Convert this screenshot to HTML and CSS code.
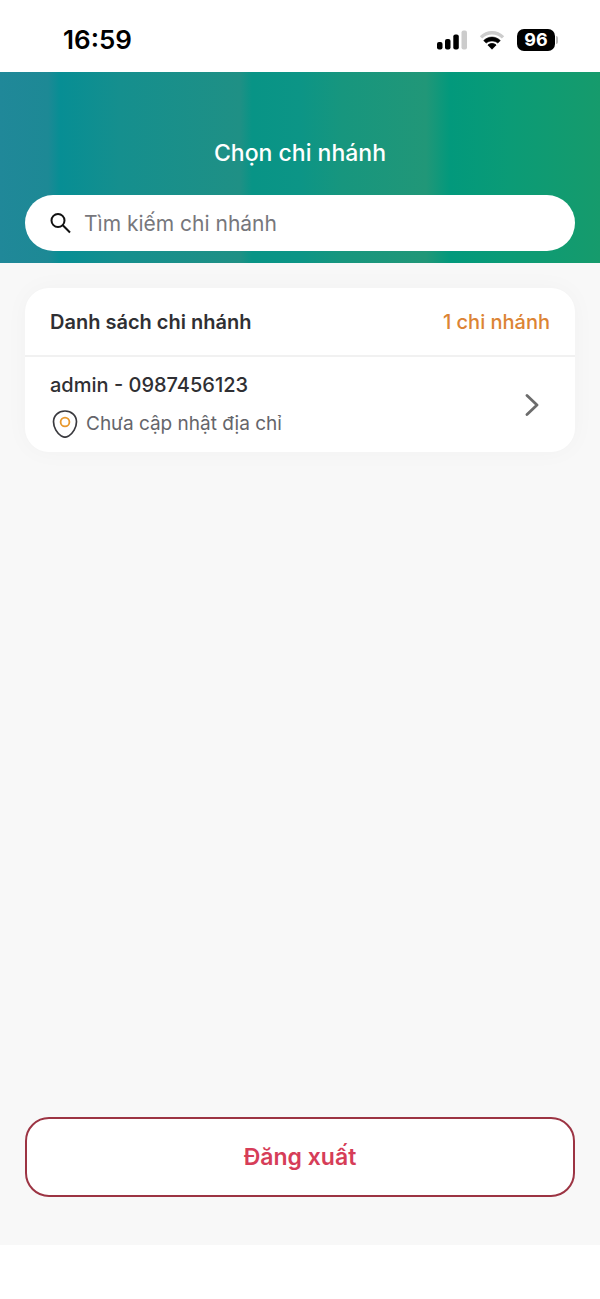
FILE: index.html
```html
<!DOCTYPE html>
<html lang="vi">
<head>
    <meta charset="UTF-8">
    <meta name="viewport" content="width=device-width, initial-scale=1.0">
    <title>Chọn chi nhánh</title>
    <link rel="stylesheet" href="styles.css">
</head>
<body>
    <div class="status-bar">
        <span class="time">16:59</span>
        <div class="status-icons">
            <svg class="signal" width="30" height="20" viewBox="0 0 30 20">
                <rect x="0" y="12" width="5.5" height="7.5" rx="2"/>
                <rect x="8" y="9" width="5.5" height="10.5" rx="2"/>
                <rect x="16.3" y="4.5" width="5.5" height="15" rx="2"/>
                <rect x="24.5" y="0.5" width="5.5" height="19" rx="2" fill="#cccccc"/>
            </svg>
            <svg class="wifi" width="26" height="20" viewBox="0 0 26 20">
                <path d="M0.8 6.2 C7.5 -0.8 18.5 -0.8 25.2 6.2 L22.8 8.6 C17.5 3.1 8.5 3.1 3.2 8.6 Z" fill="#cccccc"/>
                <path d="M4.7 10.6 C9.2 5.9 16.8 5.9 21.3 10.6 L18.8 13.1 C15.6 10.2 10.4 10.2 7.2 13.1 Z" stroke="#000000" stroke-width="0.6" stroke-linejoin="round"/>
                <path d="M8.9 15 C11.2 13 14.8 13 17.1 15 L13 19.2 Z" stroke="#000000" stroke-width="0.8" stroke-linejoin="round"/>
            </svg>
            <span class="battery">96</span>
        </div>
    </div>

    <header class="header">
        <h1>Chọn chi nhánh</h1>
        <label class="search">
            <svg width="22" height="22" viewBox="0 0 22 22" fill="none" stroke="#111111" stroke-width="2">
                <circle cx="8" cy="8.5" r="6.5"/>
                <path d="M12.8 13.3 L20 20.5"/>
            </svg>
            <input type="search" placeholder="Tìm kiếm chi nhánh" aria-label="Tìm kiếm chi nhánh">
        </label>
    </header>

    <main class="content">
        <section class="card">
            <div class="card-header">
                <h2>Danh sách chi nhánh</h2>
                <span class="count">1 chi nhánh</span>
            </div>
            <a class="branch" href="#">
                <div class="branch-info">
                    <div class="branch-name">admin - 0987456123</div>
                    <div class="branch-address">
                        <svg width="26" height="28" viewBox="0 0 26 28" fill="none">
                            <path d="M13 1 C6.4 1 1.5 5.5 1.5 11.8 C1.5 17.6 5.2 23.4 9.4 26.1 C11.7 27.5 14.3 27.5 16.6 26.1 C20.8 23.4 24.5 17.6 24.5 11.8 C24.5 5.5 19.6 1 13 1 Z" stroke="#3a3a3f" stroke-width="1.7"/>
                            <circle cx="13" cy="12" r="4.4" stroke="#e8982c" stroke-width="1.8"/>
                        </svg>
                        <span>Chưa cập nhật địa chỉ</span>
                    </div>
                </div>
                <svg class="chevron" width="14" height="22" viewBox="0 0 14 22" fill="none" stroke="#6c6c6c" stroke-width="2.8" stroke-linecap="round" stroke-linejoin="round">
                    <path d="M2 1.5 L12 11 L2 20.5"/>
                </svg>
            </a>
        </section>

        <button class="logout" type="button">Đăng xuất</button>
    </main>
</body>
</html>
```
FILE: styles.css
```css
* {
    box-sizing: border-box;
}

body {
    margin: 0;
    min-height: 100vh;
    display: flex;
    flex-direction: column;
    padding-bottom: 54px;
    background-color: #ffffff;
    font-family: Inter, "Noto Sans", sans-serif;
    color: #2f2f33;
}

h1, h2 {
    margin: 0;
}

svg {
    display: block;
    flex-shrink: 0;
}

/* status bar */
.status-bar {
    height: 72px;
    padding: 8px 42px 0 63px;
    display: flex;
    justify-content: space-between;
    align-items: flex-start;
    color: #000000;
}

.time {
    font-size: 26px;
    font-weight: 600;
    line-height: 64px;
    height: 64px;
}

.status-icons {
    display: flex;
    align-items: center;
    gap: 12px;
    height: 64px;
}

.battery {
    position: relative;
    width: 38px;
    height: 22px;
    margin-right: 3px;
    border-radius: 7px;
    background-color: #000000;
    color: #ffffff;
    font-size: 18px;
    font-weight: 700;
    line-height: 22px;
    text-align: center;
}

.battery::after {
    content: "";
    position: absolute;
    right: -3px;
    top: 7px;
    width: 2px;
    height: 8px;
    border-radius: 0 2px 2px 0;
    background-color: #bbbbbb;
}

/* header */
.header {
    padding: 64px 25px 12px;
    display: flex;
    flex-direction: column;
    gap: 25px;
    background: linear-gradient(90deg, #208899 0%, #1d8995 8%, #078e94 10%, #158f8e 20%, #1f9085 40%, #089486 42%, #0c9586 50%, #17967e 57%, #219778 71%, #02997c 75%, #0b9b76 85%, #169b6c 100%);
}

.header h1 {
    color: #ffffff;
    font-size: 23px;
    font-weight: 500;
    line-height: 34px;
    text-align: center;
}

.search {
    display: flex;
    align-items: center;
    gap: 12px;
    height: 56px;
    padding: 0 25px;
    border-radius: 28px;
    background-color: #ffffff;
}

.search input {
    flex: 1;
    min-width: 0;
    padding: 0;
    border: none;
    outline: none;
    background: none;
    font-family: inherit;
    font-size: 21px;
    color: #2f2f33;
}

.search input::placeholder {
    color: #77777c;
    opacity: 1;
}

/* content */
.content {
    flex: 1;
    display: flex;
    flex-direction: column;
    justify-content: space-between;
    gap: 24px;
    padding: 25px 25px 48px;
    background-color: #f8f8f8;
}

.card {
    border-radius: 24px;
    background-color: #ffffff;
    box-shadow: 0 0 24px rgba(0, 0, 0, 0.03);
}

.card-header {
    display: flex;
    justify-content: space-between;
    align-items: center;
    height: 69px;
    padding: 0 25px;
    border-bottom: 2px solid #f1f1f1;
}

.card-header h2 {
    font-size: 20px;
    font-weight: 600;
}

.count {
    color: #dc8434;
    font-size: 20px;
    font-weight: 500;
}

.branch {
    display: flex;
    justify-content: space-between;
    align-items: center;
    padding: 12px 36px 12px 25px;
    color: inherit;
    text-decoration: none;
}

.branch-info {
    display: flex;
    flex-direction: column;
    gap: 7px;
}

.branch-name {
    font-size: 20px;
    font-weight: 500;
    line-height: 32px;
}

.branch-address {
    display: flex;
    align-items: center;
    gap: 8px;
    padding-left: 2px;
    color: #65656a;
    font-size: 19px;
    line-height: 32px;
}

.logout {
    height: 80px;
    border: 2px solid #9c3443;
    border-radius: 24px;
    background-color: #ffffff;
    color: #d63d58;
    font-family: inherit;
    font-size: 23px;
    font-weight: 600;
    cursor: pointer;
}
```
